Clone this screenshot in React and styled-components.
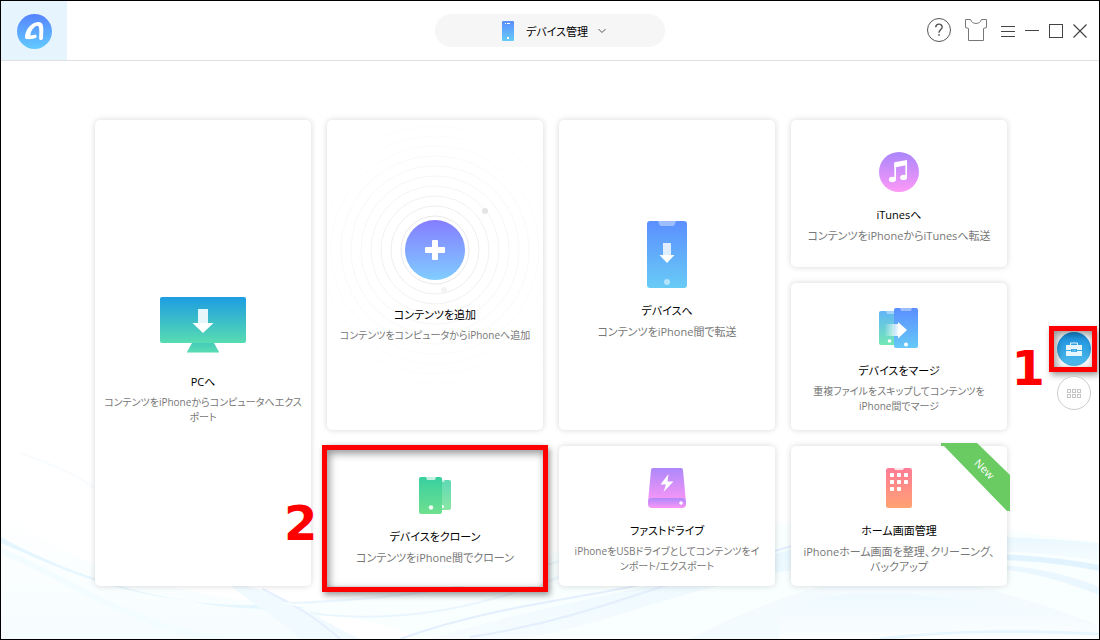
import React, { useState } from "react";
import styled, { createGlobalStyle, css } from "styled-components";

const App = () => {
  const [view, setView] = useState("toolbox");

  return (
    <>
      <GlobalStyle />
      <Window>
        <Waves />
        <Header>
          <LogoBox href="#home" aria-label="ホーム">
            <Logo />
          </LogoBox>
          <Switcher type="button">
            <SmallPhone />
            <span>デバイス管理</span>
            <Chevron />
          </Switcher>
          <WindowControls>
            <HelpIcon />
            <ShirtIcon />
            <ControlGroup>
              <MenuIcon />
              <MinimizeIcon />
              <MaximizeIcon />
              <CloseIcon />
            </ControlGroup>
          </WindowControls>
        </Header>

        <Main>
          <Cards>
            {cards.map(({ id, rows, top, gap, icon, title, text, dense, step, isNew }) => (
              <Card type="button" key={id} $rows={rows} $top={top}>
                {id === "add" && <Rings />}
                <IconBox $gap={gap}>{icon}</IconBox>
                <Title>{title}</Title>
                <Text $dense={dense}>{text}</Text>
                {step && <CardFrame />}
                {step && <CardStep>{step}</CardStep>}
                {isNew && <NewRibbon />}
              </Card>
            ))}
          </Cards>
          <Side>
            <RoundButton
              type="button"
              $filled
              aria-label="ツールボックス"
              aria-pressed={view === "toolbox"}
              onClick={() => setView("toolbox")}
            >
              <ToolboxIcon />
              <SideFrame />
              <SideStep>1</SideStep>
            </RoundButton>
            <RoundButton
              type="button"
              aria-label="カテゴリ"
              aria-pressed={view === "grid"}
              onClick={() => setView("grid")}
            >
              <GridIcon />
            </RoundButton>
          </Side>
        </Main>
      </Window>
    </>
  );
};

const Gradient = ({ id, from, to }) => (
  <linearGradient id={id} x1="0" y1="0" x2="0" y2="1">
    <stop offset="0" stopColor={from} />
    <stop offset="1" stopColor={to} />
  </linearGradient>
);

const Logo = () => (
  <svg width="35" height="35" viewBox="0 0 35 35">
    <Gradient id="logo" from="#5683ff" to="#62cbff" />
    <circle cx="17.5" cy="17.5" r="17.5" fill="url(#logo)" />
    <path
      d="M8 23C8 17 13.5 8 21.5 8C25.8 8 26.3 12 26.3 16L26 24.3C25.6 26.6 22.4 26.8 22.2 24.4C22.3 20 23 12.2 20.6 11.8C17 12 13.2 18 13.5 21.4C15.4 21.5 17.5 20.5 19.3 20.9L19.5 23.6C17 24.8 12 25.5 9.5 25C8.4 24.7 8 24 8 23Z"
      fill="#fff"
    />
  </svg>
);

const SmallPhone = () => (
  <svg width="12" height="20" viewBox="0 0 12 20">
    <Gradient id="small" from="#5b8dff" to="#67cbf8" />
    <rect width="12" height="20" rx="1" fill="url(#small)" />
    <path d="M3 2.5h1M5 2.5h3" stroke="#fff" strokeWidth="1" />
    <rect x="5" y="16" width="2" height="2" fill="#fff" />
  </svg>
);

const Chevron = () => (
  <svg width="8" height="6" viewBox="0 0 8 6" fill="none" stroke="#555">
    <path d="M.5 1L4 4.5L7.5 1" />
  </svg>
);

const HelpIcon = () => (
  <ControlButton type="button" aria-label="ヘルプ">
    <svg width="24" height="24" viewBox="0 0 24 24" fill="none" stroke="#555">
      <circle cx="12" cy="12" r="11.5" />
      <path d="M8.7 9.3C8.8 5.1 15.2 5.2 15.2 9C15.2 11.5 12 11.5 12 14.8" strokeWidth="1.4" />
      <path d="M11.2 17h1.6" strokeWidth="1.6" />
    </svg>
  </ControlButton>
);

const ShirtIcon = () => (
  <ControlButton type="button" aria-label="スキン">
    <svg width="22" height="22" viewBox="0 0 22 22" fill="none" stroke="#777">
      <path d="M.5 .5H5.5C7 5.8 15 5.8 16.5 .5H21.5V8.5L18.5 9.5V21.5H3.5V9.5L.5 8.5Z" />
    </svg>
  </ControlButton>
);

const MenuIcon = () => (
  <ControlButton type="button" aria-label="メニュー">
    <svg width="14" height="14" viewBox="0 0 14 14" stroke="#444">
      <path d="M0 2.5h14M0 7.5h14M0 12.5h14" />
    </svg>
  </ControlButton>
);

const MinimizeIcon = () => (
  <ControlButton type="button" aria-label="最小化">
    <svg width="14" height="14" viewBox="0 0 14 14" stroke="#444">
      <path d="M0 6.5h14" />
    </svg>
  </ControlButton>
);

const MaximizeIcon = () => (
  <ControlButton type="button" aria-label="最大化">
    <svg width="14" height="14" viewBox="0 0 14 14" stroke="#444" fill="none">
      <rect x=".5" y=".5" width="13" height="13" />
    </svg>
  </ControlButton>
);

const CloseIcon = () => (
  <ControlButton type="button" aria-label="閉じる">
    <svg width="14" height="14" viewBox="0 0 14 14" stroke="#444" strokeWidth="1.2">
      <path d="M.5 .5L13.5 13.5M13.5 .5L.5 13.5" />
    </svg>
  </ControlButton>
);

const ComputerIcon = () => (
  <svg width="86" height="56" viewBox="0 0 86 56">
    <Gradient id="pc" from="#1d9de1" to="#58dcb1" />
    <Gradient id="stand" from="#45cbbb" to="#58dcb1" />
    <rect width="86" height="46" rx="2" fill="url(#pc)" />
    <path d="M32 46H54L59 55H27Z" fill="url(#stand)" />
    <path d="M27 55.5H59" stroke="#a9ecd6" />
    <path d="M38 12h10v14H38Z" fill="#fff" opacity=".88" />
    <path d="M32.5 26H53.5L43 36Z" fill="#fff" />
  </svg>
);

const AddIcon = () => (
  <svg width="60" height="60" viewBox="0 0 60 60">
    <Gradient id="add" from="#857dff" to="#80cdff" />
    <circle cx="30" cy="30" r="30" fill="url(#add)" />
    <rect x="20" y="27" width="20" height="6" rx="1" fill="#fff" />
    <rect x="27" y="20" width="6" height="20" rx="1" fill="#fff" />
  </svg>
);

// Circles that spread out from the add button and fade away
const Rings = () => (
  <RingsSvg viewBox="0 0 216 311" preserveAspectRatio="xMidYMin slice">
    <g fill="none" stroke="#000">
      {Array.from({ length: 13 }, (_, i) => (
        <circle key={i} cx="108" cy="130" r={34 + i * 10} opacity={0.085 * Math.pow(0.82, i)} />
      ))}
    </g>
    <circle cx="158" cy="91" r="3" fill="#e4e4e4" />
    <circle cx="117" cy="170" r="3" fill="#f3f3f3" />
  </RingsSvg>
);

const DeviceIcon = () => (
  <svg width="40" height="67" viewBox="0 0 40 67">
    <Gradient id="device" from="#5b8fff" to="#68cbf5" />
    <rect width="40" height="67" rx="3" fill="url(#device)" />
    <path d="M11 0H29L27.5 4Q27 5 26 5H14Q13 5 12.5 4Z" fill="#fff" opacity=".4" />
    <path d="M16 22h8v12h-8Z" fill="#fff" opacity=".8" />
    <path d="M12.5 34H27.5L20 42Z" fill="#fff" />
    <circle cx="20" cy="61" r="3" fill="#fff" opacity=".5" />
  </svg>
);

const MusicIcon = () => (
  <svg width="40" height="40" viewBox="0 0 40 40">
    <Gradient id="music" from="#aa86fc" to="#fd99f7" />
    <circle cx="20" cy="20" r="20" fill="url(#music)" />
    <path d="M15.3 10.3L28 8V13L17 15.2H15.3Z" fill="#fff" />
    <path d="M16.2 11V27M27.2 9V25" stroke="#fff" strokeWidth="1.7" />
    <ellipse cx="13.4" cy="27.5" rx="3.5" ry="2.7" fill="#fff" />
    <ellipse cx="24.6" cy="25.4" rx="3.4" ry="2.6" fill="#fff" />
  </svg>
);

const MergeIcon = () => (
  <svg width="40" height="41" viewBox="0 0 40 41">
    <Gradient id="mergeBack" from="#62b5f8" to="#72e8b5" />
    <Gradient id="mergeFront" from="#5a8eff" to="#66caf7" />
    <linearGradient id="trail" x1="0" x2="1" y1="0" y2="0">
      <stop offset="0" stopColor="#fff" stopOpacity=".05" />
      <stop offset="1" stopColor="#fff" stopOpacity=".9" />
    </linearGradient>
    <rect y="4" width="24" height="34" rx="2" fill="url(#mergeBack)" />
    <path d="M7 4H15V7H8Z" fill="#fff" opacity=".4" />
    <circle cx="10.5" cy="34" r="1.8" fill="#fff" />
    <rect x="15" y="1" width="24" height="40" rx="2" fill="url(#mergeFront)" />
    <path d="M21 1H33L32 4H22Z" fill="#fff" opacity=".4" />
    <rect x="6" y="17" width="13" height="12" fill="url(#trail)" />
    <path d="M19 15L28 23L19 31.5Z" fill="#fff" />
    <circle cx="27" cy="37.5" r="2" fill="#fff" />
  </svg>
);

const CloneIcon = () => (
  <svg width="32" height="37" viewBox="0 0 32 37">
    <Gradient id="cloneFront" from="#37cfa0" to="#6fe08f" />
    <g opacity=".8">
      <rect x="12" y="3" width="20" height="30" rx="2" fill="url(#cloneFront)" />
    </g>
    <path d="M23 3H26L25 5H23Z" fill="#fff" opacity=".6" />
    <circle cx="23.5" cy="29.5" r="1.5" fill="#fff" />
    <rect width="23" height="37" rx="2" fill="url(#cloneFront)" />
    <path d="M7 0H17L16 3H8Z" fill="#fff" opacity=".7" />
    <circle cx="12" cy="30.5" r="2.3" fill="#fff" opacity=".9" />
  </svg>
);

const DriveIcon = () => (
  <svg width="38" height="40" viewBox="0 0 38 40">
    <Gradient id="drive" from="#ad88fb" to="#fb97f6" />
    <path d="M3 2Q3 0 5 0H33Q35 0 35 2L38 34H0Z" fill="url(#drive)" />
    <rect y="30" width="38" height="10" rx="4" fill="url(#drive)" />
    <path d="M20.5 6L12.5 16.5H18L15.5 24L25.5 13.5H19.5Z" fill="#fff" />
    <circle cx="33" cy="35" r="1.8" fill="#fff" />
  </svg>
);

const HomeIcon = () => (
  <svg width="26" height="40" viewBox="0 0 26 40">
    <Gradient id="home" from="#ff7c96" to="#ffa272" />
    <rect width="26" height="40" rx="2.5" fill="url(#home)" />
    <path d="M8 0H18L17 2H9Z" fill="#fff" opacity=".8" />
    {[[4, 5], [11, 5], [18, 5], [4, 12], [11, 12], [18, 12], [4, 19], [11, 19]].map(([x, y]) => (
      <rect key={`${x}-${y}`} x={x} y={y} width="4" height="4" rx=".8" fill="#fff" />
    ))}
  </svg>
);

const ToolboxIcon = () => (
  <svg width="16" height="15" viewBox="0 0 16 15">
    <path d="M4.5 3V1H11.5V3" fill="none" stroke="#fff" opacity=".9" />
    <path d="M0 3H16V8H11V7H5V8H0Z" fill="#fff" opacity=".88" />
    <path d="M0 9H5V10H11V9H16V14H0Z" fill="#fff" opacity=".88" />
    <path d="M6 7.5h4v2H6Z" fill="#fff" opacity=".2" />
  </svg>
);

const GridIcon = () => (
  <svg width="14" height="9" viewBox="0 0 14 9" fill="none" stroke="#c4c4c4">
    {[0.5, 5.5, 10.5].map((x) => (
      <React.Fragment key={x}>
        <rect x={x} y=".5" width="3" height="3" />
        <rect x={x} y="5.5" width="3" height="3" />
      </React.Fragment>
    ))}
  </svg>
);

const NewRibbon = () => (
  <Ribbon>
    <svg width="69" height="68" viewBox="0 0 69 68">
      <path d="M0 0H36L69 32V68H66L3 3H0Z" fill="#69cb62" />
    </svg>
    <RibbonText>New</RibbonText>
  </Ribbon>
);

const Waves = () => (
  <WavesSvg viewBox="0 0 1100 220" preserveAspectRatio="none">
    <Gradient id="haze" from="#ffffff" to="#f6fdff" />
    <Gradient id="sheet" from="#edf9ff" to="#fcfeff" />
    <Gradient id="band" from="#e9f8ff" to="#f6fcff" />
    <path d="M0 90C60 140 150 175 320 190V220H0Z" fill="url(#haze)" />
    <path d="M20 34C50 45 75 55 95 70" fill="none" stroke="#f8fcfe" strokeWidth="2" />
    <path
      d="M0 118C80 163 180 188 250 186C300 186 330 187 360 183C300 193 230 192 190 182C110 173 60 150 0 124Z"
      fill="#e6f6fe"
    />
    <path d="M0 132C70 160 130 208 220 220" fill="none" stroke="#f3fcff" strokeWidth="6" />
    <path d="M225 162C270 170 300 190 360 220H300C280 200 250 185 225 162Z" fill="#f0faff" />
    <path d="M262 170C290 184 310 194 340 220" fill="none" stroke="#e6effe" strokeWidth="2" />
    <path
      d="M280 184C370 178 450 170 560 132C700 90 960 100 1100 124V220H420C390 205 340 196 280 184Z"
      fill="#f9feff"
    />
    <path d="M290 184C400 180 480 168 560 142M310 194C400 206 480 188 560 158" fill="none" stroke="#eaf6fe" strokeWidth="2" />
    <path d="M430 220C530 188 650 172 800 128V150C690 166 600 208 520 220Z" fill="url(#band)" />
    <path d="M470 218C590 200 670 160 800 125M400 220C510 180 610 180 700 150" fill="none" stroke="#e3effd" strokeWidth="2" />
    <path d="M690 220C750 190 800 168 900 150C1000 170 1060 190 1100 207V220Z" fill="#f3fbff" />
    <path d="M1000 118C1040 119 1070 122 1100 124V142C1050 134 1030 134 1000 132Z" fill="url(#band)" />
    <path d="M1000 135C1040 137 1070 140 1100 146V152C1060 144 1030 142 1000 141Z" fill="#e1f3fe" />
    <path d="M1000 146C1040 149 1070 156 1100 168V176C1060 160 1030 153 1000 150Z" fill="#eaf7ff" />
    <path d="M780 192C850 160 960 176 1100 207V220H780Z" fill="url(#sheet)" />
    <path d="M880 220C960 210 1030 212 1100 215" fill="none" stroke="#e8f7ff" strokeWidth="3" />
  </WavesSvg>
);

const cards = [
  {
    id: "pc",
    rows: 3,
    top: 16,
    gap: 21,
    icon: <ComputerIcon />,
    title: "PCへ",
    text: "コンテンツをiPhoneからコンピュータへエクス\nポート",
    dense: true,
  },
  {
    id: "add",
    rows: 2,
    top: 13,
    gap: 27,
    icon: <AddIcon />,
    title: "コンテンツを追加",
    text: "コンテンツをコンピュータからiPhoneへ追加",
    dense: true,
  },
  {
    id: "device",
    rows: 2,
    icon: <DeviceIcon />,
    title: "デバイスへ",
    text: "コンテンツをiPhone間で転送",
  },
  {
    id: "itunes",
    top: 8,
    icon: <MusicIcon />,
    title: "iTunesへ",
    text: "コンテンツをiPhoneからiTunesへ転送",
  },
  {
    id: "merge",
    top: 8,
    icon: <MergeIcon />,
    title: "デバイスをマージ",
    text: "重複ファイルをスキップしてコンテンツを\niPhone間でマージ",
    dense: true,
  },
  {
    id: "clone",
    icon: <CloneIcon />,
    title: "デバイスをクローン",
    text: "コンテンツをiPhone間でクローン",
    step: 2,
  },
  {
    id: "drive",
    icon: <DriveIcon />,
    title: "ファストドライブ",
    text: "iPhoneをUSBドライブとしてコンテンツをイ\nンポート/エクスポート",
    dense: true,
  },
  {
    id: "home",
    icon: <HomeIcon />,
    title: "ホーム画面管理",
    text: "iPhoneホーム画面を整理、クリーニング、\nバックアップ",
    isNew: true,
  },
];

const GlobalStyle = createGlobalStyle`
  * {
    box-sizing: border-box;
  }
  body {
    margin: 0;
    background: #fff;
    font-family: "Open Sans", "Noto Sans CJK JP", sans-serif;
    font-feature-settings: "palt";
  }
  button {
    font: inherit;
    font-feature-settings: inherit;
    color: inherit;
    cursor: pointer;
  }
  svg {
    display: block;
    flex-shrink: 0;
  }
`;

const Window = styled.div`
  position: relative;
  z-index: 0;
  display: flex;
  flex-direction: column;
  min-height: 100vh;
  border: 1px solid #000;
`;

const WavesSvg = styled.svg`
  position: absolute;
  z-index: -1;
  left: 0;
  bottom: 0;
  width: 100%;
  height: 220px;
`;

const Header = styled.header`
  display: grid;
  grid-template-columns: 1fr 230px 1fr;
  align-items: center;
  height: 60px;
  border-bottom: 1px solid #e0e0e0;
  background: #fff;
`;

const LogoBox = styled.a`
  display: flex;
  align-items: center;
  justify-content: center;
  width: 66px;
  height: 59px;
  padding-top: 2px;
  background: #e6f4fe;
`;

const Switcher = styled.button`
  display: flex;
  align-items: center;
  justify-content: center;
  height: 33px;
  padding: 0 0 0 8px;
  border: none;
  border-radius: 17px;
  background: #f6f6f6;
  color: #000;
  font-size: 11px;

  span {
    margin: 0 10px 0 12px;
  }
`;

const WindowControls = styled.div`
  display: flex;
  align-items: center;
  justify-content: flex-end;
  gap: 14px;
  padding: 0 12px 2px 0;
`;

const ControlGroup = styled.div`
  display: flex;
  gap: 10px;
  padding-top: 2px;
`;

const ControlButton = styled.button`
  padding: 0;
  border: none;
  background: none;
`;

const Main = styled.main`
  display: flex;
  flex: 1;
  align-items: flex-start;
  padding: 59px 0 53px 94px;
`;

const Cards = styled.section`
  display: grid;
  flex: 1;
  grid-template-columns: repeat(4, minmax(0, 1fr));
  grid-template-rows: minmax(147px, auto) minmax(147px, auto) minmax(140px, auto);
  gap: 16px;
`;

const Card = styled.button`
  position: relative;
  z-index: 0;
  display: flex;
  flex-direction: column;
  align-items: center;
  justify-content: center;
  grid-row: span ${({ $rows }) => $rows || 1};
  padding: ${({ $top }) => $top || 10}px 0 0;
  border: none;
  border-radius: 5px;
  background: #fff;
  box-shadow: 0 0 6px rgba(0, 0, 0, 0.16);
`;

const RingsSvg = styled.svg`
  position: absolute;
  z-index: -1;
  inset: 0;
  width: 100%;
  height: 100%;
`;

const IconBox = styled.span`
  margin-bottom: ${({ $gap }) => $gap || 15}px;
`;

const Title = styled.span`
  margin-bottom: 5px;
  color: #000;
  font-size: 11px;
  line-height: 16px;
`;

const Text = styled.span`
  color: #777;
  font-size: ${({ $dense }) => ($dense ? 10 : 11)}px;
  line-height: 15px;
  white-space: pre;
`;

const frame = css`
  position: absolute;
  border: 5px solid #f00;
  box-shadow: 2px 3px 6px rgba(0, 0, 0, 0.4), inset 2px 3px 8px rgba(0, 0, 0, 0.45);
  pointer-events: none;
`;

const CardFrame = styled.span`
  ${frame}
  inset: -1px -5px -6px;
`;

const SideFrame = styled.span`
  ${frame}
  inset: -6px -6px -6px -8px;
`;

const Step = styled.span`
  position: absolute;
  color: #f00;
  font-family: "DejaVu Sans", sans-serif;
  font-size: 48px;
  font-weight: bold;
  line-height: 48px;
`;

const CardStep = styled(Step)`
  left: -43px;
  bottom: 39px;
`;

const SideStep = styled(Step)`
  right: 46px;
  top: 12px;
`;

const Ribbon = styled.span`
  position: absolute;
  top: -3px;
  right: -3px;
`;

const RibbonText = styled.span`
  position: absolute;
  top: 18px;
  left: 32px;
  color: #fff;
  font-size: 11px;
  line-height: 16px;
  transform: rotate(45deg);
`;

const Side = styled.nav`
  display: flex;
  flex-direction: column;
  align-self: center;
  align-items: flex-end;
  gap: 10px;
  width: 92px;
  padding: 36px 8px 0 0;
`;

const RoundButton = styled.button`
  position: relative;
  display: flex;
  align-items: center;
  justify-content: center;
  width: 34px;
  height: 34px;
  padding: 0;
  border: ${({ $filled }) => ($filled ? "none" : "1px solid #ccc")};
  border-radius: 50%;
  background: ${({ $filled }) =>
    $filled ? "linear-gradient(#1690e2, #52bdec)" : "#fff"};
`;

export default App;
